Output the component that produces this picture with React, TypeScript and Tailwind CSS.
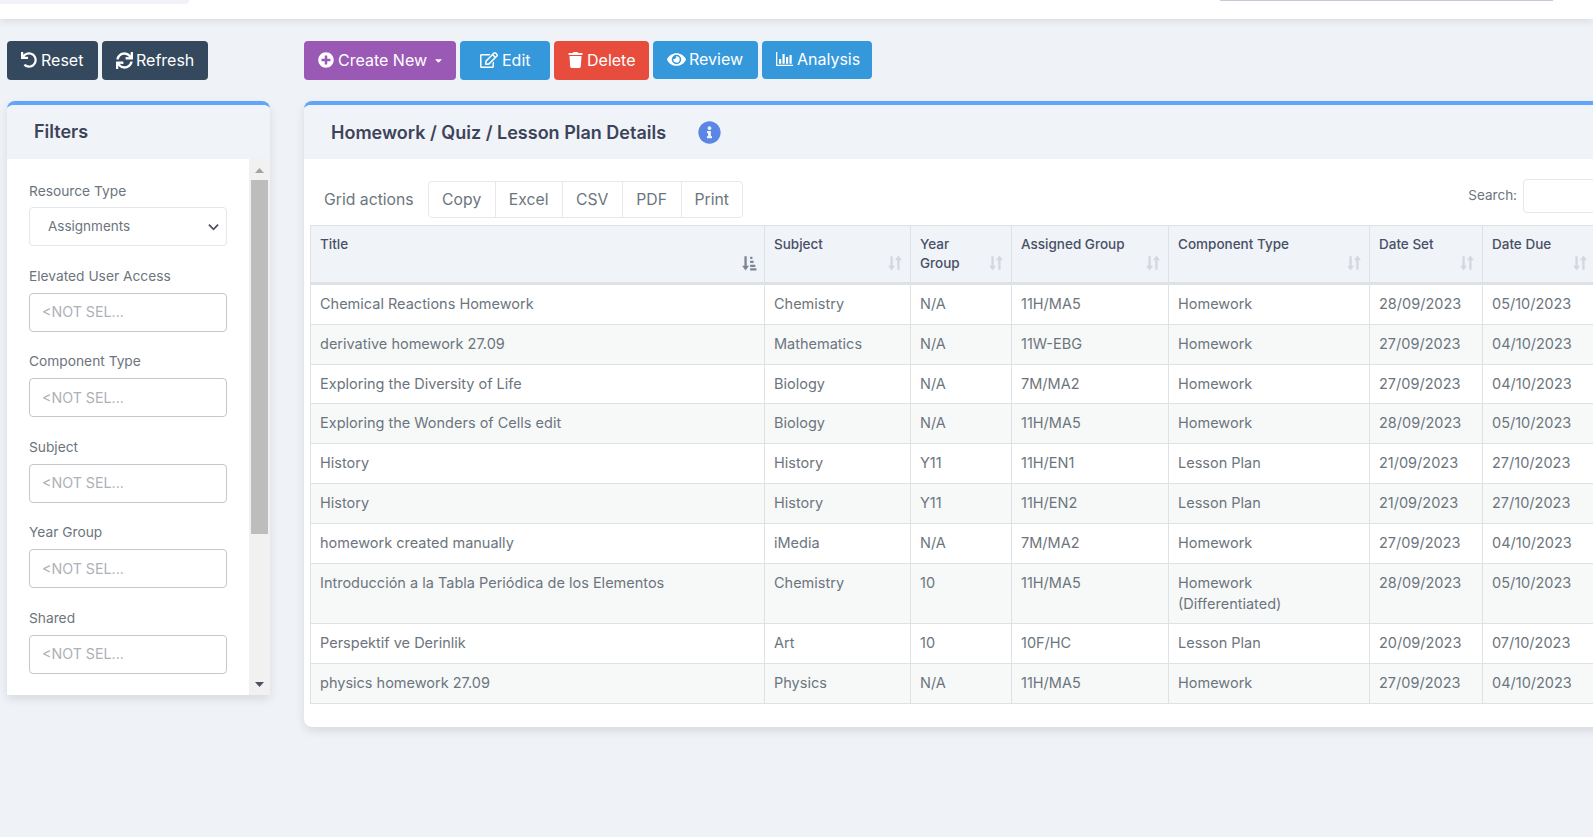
import { FaUndo, FaSync, FaPlusCircle, FaRegEdit, FaTrash, FaEye, FaInfoCircle, FaCaretDown } from "react-icons/fa";

const rows = [
  ["Chemical Reactions Homework", "Chemistry", "N/A", "11H/MA5", "Homework", "28/09/2023", "05/10/2023"],
  ["derivative homework 27.09", "Mathematics", "N/A", "11W-EBG", "Homework", "27/09/2023", "04/10/2023"],
  ["Exploring the Diversity of Life", "Biology", "N/A", "7M/MA2", "Homework", "27/09/2023", "04/10/2023"],
  ["Exploring the Wonders of Cells edit", "Biology", "N/A", "11H/MA5", "Homework", "28/09/2023", "05/10/2023"],
  ["History", "History", "Y11", "11H/EN1", "Lesson Plan", "21/09/2023", "27/10/2023"],
  ["History", "History", "Y11", "11H/EN2", "Lesson Plan", "21/09/2023", "27/10/2023"],
  ["homework created manually", "iMedia", "N/A", "7M/MA2", "Homework", "27/09/2023", "04/10/2023"],
  ["Introducción a la Tabla Periódica de los Elementos", "Chemistry", "10", "11H/MA5", "Homework (Differentiated)", "28/09/2023", "05/10/2023"],
  ["Perspektif ve Derinlik", "Art", "10", "10F/HC", "Lesson Plan", "20/09/2023", "07/10/2023"],
  ["physics homework 27.09", "Physics", "N/A", "11H/MA5", "Homework", "27/09/2023", "04/10/2023"],
];

const columns = [
  { label: "Title", width: "w-[454px]", sorted: true },
  { label: "Subject", width: "w-[146px]" },
  { label: "Year Group", width: "w-[101px]" },
  { label: "Assigned Group", width: "w-[157px]" },
  { label: "Component Type", width: "w-[201px]" },
  { label: "Date Set", width: "w-[113px]" },
  { label: "Date Due", width: "w-[113px]" },
];

const filters = ["Elevated User Access", "Component Type", "Subject", "Year Group", "Shared"];

function SortIcon({ sorted }: { sorted?: boolean }) {
  return (
    <svg viewBox="0 0 14 14" className="absolute right-[7px] bottom-[11px] w-[16px] h-[16px]">
      {sorted ? (
        <g fill="#7c8593">
          <path d="M3 1h2v8.500h2L4 13.500 1 9.500h2z" />
          <path d="M8 1.500h2v2H8zM8 5h3v2H8zM8 8.500h4.500v2H8zM8 11.500h5.500v2H8z" />
        </g>
      ) : (
        <g fill="#d3d7de">
          <path d="M3 1h2v8.500h2L4 13.500 1 9.500h2z" />
          <path d="M9 13h2V4.500h2L10 .5 7 4.500h2z" />
        </g>
      )}
    </svg>
  );
}

function BarsIcon() {
  return (
    <svg viewBox="0 0 17 14" className="w-[17px] h-[14px]" fill="currentColor">
      <path d="M0 0h1.300v12.700H17V14H0z" />
      <path d="M3 7h2.200v4.700H3zM6.500 2h2.200v9.700H6.500zM10 5h2.200v6.700H10zM13.500 3h2.200v8.700h-2.200z" />
    </svg>
  );
}

export default function App() {
  return (
    <div className="h-[837px] overflow-hidden bg-[#eff2f7] text-[#6c757d] font-['Inter','Liberation_Sans',sans-serif]">
      <header className="h-[19px] bg-white shadow-[0_2px_8px_rgba(0,0,0,0.1)] flex justify-between items-start relative">
        <div className="w-[189px] h-[4px] bg-[#f1f3f8] rounded-br-lg" />
        <div className="w-[333px] h-px bg-[#c5cad8] mr-[40px]" />
      </header>

      <div className="flex pt-[22px] pl-[7px] w-[1800px]">
        <aside className="w-[263px] shrink-0">
          <div className="flex gap-1 h-[39px] text-white text-[16px]">
            <button className="flex items-center gap-[4px] pl-[14px] pb-px w-[91px] rounded bg-[#34495e]">
              <FaUndo className="w-[16px] h-[16px]" /> Reset
            </button>
            <button className="flex items-center gap-[3px] pl-[14px] pb-px w-[106px] rounded bg-[#34495e]">
              <FaSync className="w-[17px] h-[17px]" /> Refresh
            </button>
          </div>

          <div className="mt-[21px] h-[594px] bg-white rounded-t-lg border-t-4 border-[#60a5fa] shadow-[0_4px_10px_rgba(0,0,0,0.1)] overflow-hidden">
            <div className="h-[54px] bg-[#f0f3f8] flex items-center pl-[27px] pb-[2px] text-[18px] font-semibold text-[#3d4459]">
              Filters
            </div>
            <div className="flex h-[536px]">
              <div className="w-[242px] px-[22px] pt-[24px]">
                <label className="block text-[13.75px] leading-[17px]">Resource Type</label>
                <div className="mt-[7px] h-[39px] border border-[#e4e7eb] rounded flex items-center justify-between pl-[18px] pr-[7px] text-[13.5px]">
                  <span>Assignments</span>
                  <svg viewBox="0 0 12 8" className="w-[11px] h-[8px]">
                    <path d="M1 1.500l5 5 5-5" fill="none" stroke="#4b5160" strokeWidth="2" />
                  </svg>
                </div>
                {filters.map((label) => (
                  <div key={label} className="mt-[21.500px]">
                    <label className="block text-[13.75px] leading-[17px]">{label}</label>
                    <div className="mt-[8px] h-[39px] border border-[#c4c7cc] rounded flex items-center pl-[12px] text-[14.250px] text-[#adb1b7]">
                      &lt;NOT SEL...
                    </div>
                  </div>
                ))}
              </div>
              <div className="w-[21px] bg-[#f1f1f1] flex flex-col items-center justify-between pb-[8px]">
                <div className="w-full flex flex-col items-center pt-[9px]">
                  <svg viewBox="0 0 9 5" className="w-[9px] h-[5px]" fill="#a3a3a3">
                    <path d="M4.500 0L9 5H0z" />
                  </svg>
                  <div className="w-[17px] h-[354px] bg-[#bdbdbd] mt-[7px]" />
                </div>
                <svg viewBox="0 0 9 5" className="w-[9px] h-[5px]" fill="#505061">
                  <path d="M0 0h9L4.500 5z" />
                </svg>
              </div>
            </div>
          </div>
        </aside>

        <main className="ml-[34px] flex-1 min-w-0">
          <div className="flex gap-1 text-white text-[16px] whitespace-nowrap">
            <button className="h-[39px] w-[152px] rounded bg-[#9b59b6] flex items-center pl-[14px] pb-px gap-[4px]">
              <FaPlusCircle className="w-[16px] h-[16px]" /> Create New
              <FaCaretDown className="w-[11px] h-[11px] ml-[2px]" />
            </button>
            <button className="h-[39px] w-[90px] rounded bg-[#3498db] flex items-center pl-[20px] pb-px gap-[4px]">
              <FaRegEdit className="w-[18px] h-[18px]" /> Edit
            </button>
            <button className="h-[39px] w-[95px] rounded bg-[#e74c3c] flex items-center pl-[14px] pb-px gap-[4px]">
              <FaTrash className="w-[15px] h-[16px]" /> Delete
            </button>
            <button className="h-[38px] w-[105px] rounded bg-[#3498db] flex items-center pl-[14px] gap-[3px] pb-[2px]">
              <FaEye className="w-[19px] h-[17px]" /> Review
            </button>
            <button className="h-[38px] w-[110px] rounded bg-[#3498db] flex items-center pl-[14px] gap-[4px] pb-[2px]">
              <BarsIcon /> Analysis
            </button>
          </div>

          <div className="mt-[21px] h-[626px] bg-white rounded-lg border-t-4 border-[#60a5fa] shadow-[0_4px_10px_rgba(0,0,0,0.1)] overflow-hidden">
            <div className="h-[54px] bg-[#f0f3f8] flex items-center pl-[27px] text-[18px] font-semibold text-[#3d4459]">
              Homework / Quiz / Lesson Plan Details
              <FaInfoCircle className="ml-[32px] w-[23px] h-[23px] text-[#5b86e5]" />
            </div>

            <div className="flex items-center justify-between w-[1339px] pl-[20px] pt-[22px] h-[59px]">
              <div className="flex items-center text-[15.750px]">
                <span className="mr-[14px]">Grid actions</span>
                <div className="flex h-[37px] border border-[#e6e8ec] rounded divide-x divide-[#e6e8ec]">
                  <span className="w-[67px] flex items-center justify-center">Copy</span>
                  <span className="w-[67px] flex items-center justify-center">Excel</span>
                  <span className="w-[60px] flex items-center justify-center">CSV</span>
                  <span className="w-[59px] flex items-center justify-center">PDF</span>
                  <span className="w-[60px] flex items-center justify-center">Print</span>
                </div>
              </div>
              <div className="flex items-center text-[13.500px] -mt-[9px]">
                <span className="mr-[6px]">Search:</span>
                <div className="w-[120px] h-[34px] mt-[2px] border border-[#e4e7eb] rounded" />
              </div>
            </div>

            <table className="ml-[6px] mt-[7px] border-collapse table-fixed w-[1285px] text-[14.500px]">
              <thead>
                <tr className="h-[58px] bg-[#f0f3f8] border-b-[3px] border-[#dee2e6]">
                  {columns.map((col) => (
                    <th
                      key={col.label}
                      className={`${col.width} relative border border-[#dee2e6] border-b-[3px] pl-[9px] pr-[26px] pt-[9px] align-top text-left text-[13.500px] font-medium text-[#495065] leading-[19px]`}
                    >
                      {col.label}
                      <SortIcon sorted={col.sorted} />
                    </th>
                  ))}
                </tr>
              </thead>
              <tbody>
                {rows.map((row, i) => (
                  <tr key={i} className={i % 2 === 1 ? "bg-[#f7f9f9]" : "bg-white"}>
                    {row.map((cell, j) => (
                      <td
                        key={j}
                        className={`border border-[#dee2e6] pl-[9px] pt-[8px] pb-[9.800px] align-top leading-[21px] ${j === 4 ? "pr-[30px]" : "pr-[9px]"}`}
                      >
                        {cell}
                      </td>
                    ))}
                  </tr>
                ))}
              </tbody>
            </table>
          </div>
        </main>
      </div>
    </div>
  );
}
